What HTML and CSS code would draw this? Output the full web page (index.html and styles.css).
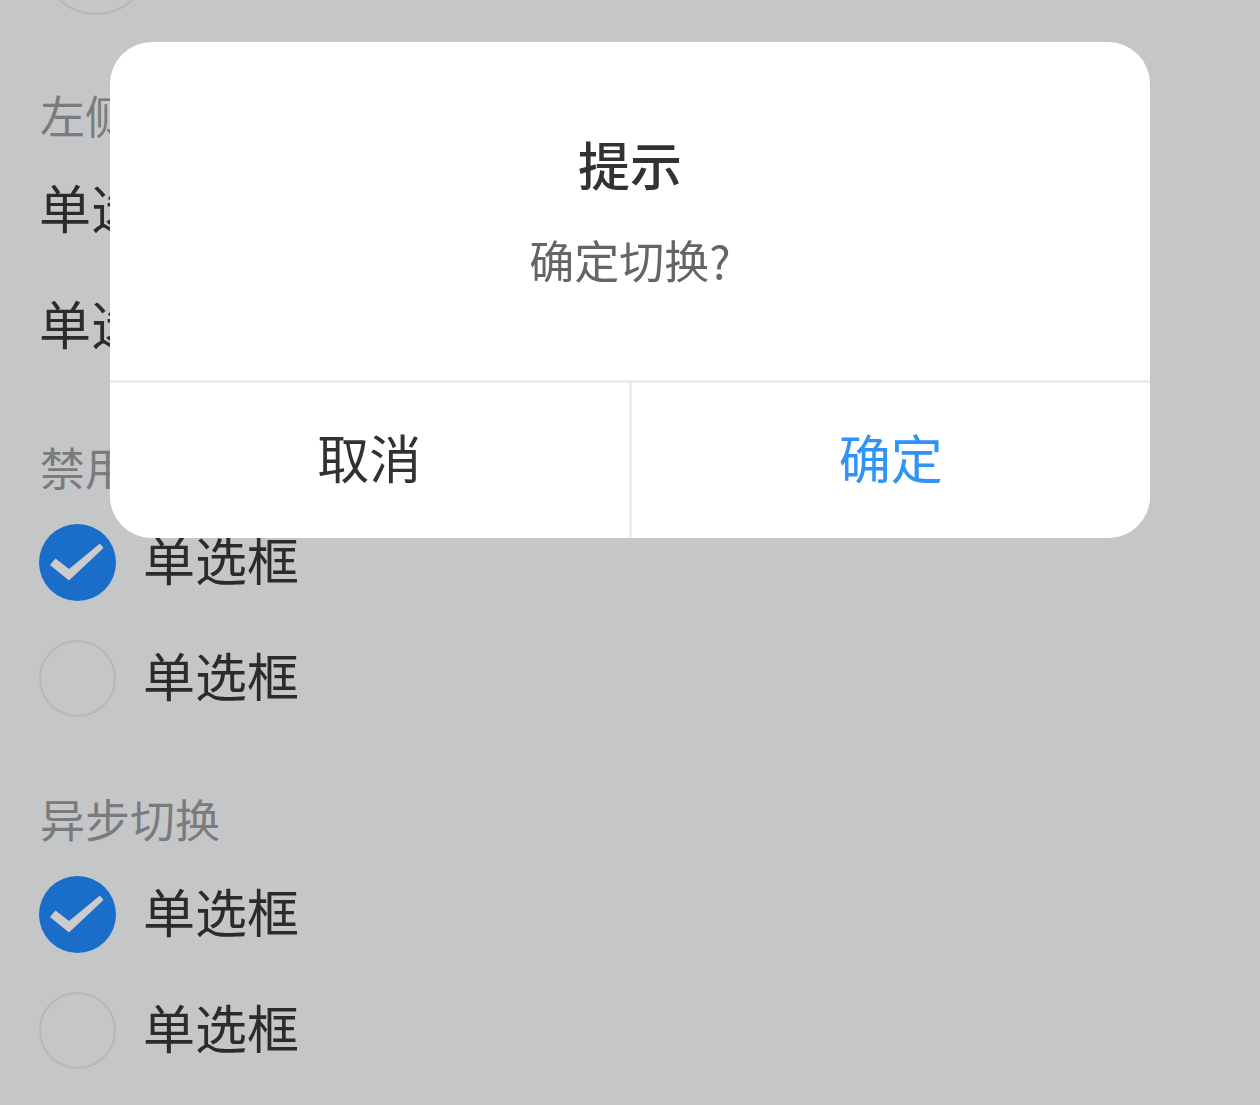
FILE: index.html
```html
<!DOCTYPE html>
<html lang="zh-CN">
<head>
<meta charset="utf-8">
<title>Radio 单选框</title>
<link rel="stylesheet" href="styles.css">
</head>
<body>
<main class="page">
  <section class="block block-first">
    <div class="row row-big"><span class="radio radio-big"></span></div>
  </section>

  <section class="block">
    <h2 class="title">左侧文本</h2>
    <div class="row"><span class="label label-left">单选框</span><span class="radio checked"><svg viewBox="0 0 77 77"><circle cx="38.5" cy="38.5" r="38.5" class="fill"/><polygon class="tick" points="16.5,34.5 11,41 30,56.5 64.5,24 61,19.5 30,45"/></svg></span></div>
    <div class="row"><span class="label label-left">单选框</span><span class="radio"></span></div>
  </section>

  <section class="block">
    <h2 class="title">禁用文本点击</h2>
    <div class="row"><span class="radio checked"><svg viewBox="0 0 77 77"><circle cx="38.5" cy="38.5" r="38.5" class="fill"/><polygon class="tick" points="16.5,34.5 11,41 30,56.5 64.5,24 61,19.5 30,45"/></svg></span><span class="label">单选框</span></div>
    <div class="row"><span class="radio"></span><span class="label">单选框</span></div>
  </section>

  <section class="block">
    <h2 class="title">异步切换</h2>
    <div class="row"><span class="radio checked"><svg viewBox="0 0 77 77"><circle cx="38.5" cy="38.5" r="38.5" class="fill"/><polygon class="tick" points="16.5,34.5 11,41 30,56.5 64.5,24 61,19.5 30,45"/></svg></span><span class="label">单选框</span></div>
    <div class="row"><span class="radio"></span><span class="label">单选框</span></div>
  </section>
</main>

<div class="overlay"></div>

<div class="dialog" role="dialog">
  <div class="dialog-content">
    <div class="dialog-title">提示</div>
    <div class="dialog-message">确定切换?</div>
  </div>
  <div class="dialog-footer">
    <button class="dialog-btn cancel">取消</button>
    <button class="dialog-btn confirm">确定</button>
  </div>
</div>
</body>
</html>
```

FILE: styles.css
```css
html, body {
  margin: 0;
  padding: 0;
}

body {
  background: #f7f8fa;
  font-family: "Noto Sans CJK SC", "Noto Sans", sans-serif;
  color: #363637;
  overflow: hidden;
  height: 1105px;
}

.page {
  padding: 0 39px;
}

.block {
  padding-top: 54px;
}

.block-first {
  padding-top: 0;
  margin-top: -112px;
}

.title {
  margin: 0 0 2px;
  padding: 0 0 6px 1px;
  font-size: 45px;
  line-height: 58px;
  font-weight: 400;
  color: #999a9c;
}

.row {
  display: flex;
  align-items: center;
  height: 116px;
}

.row-big {
  height: 144px;
}

.radio {
  flex: none;
  box-sizing: border-box;
  width: 77px;
  height: 77px;
  border: 2px solid #e4e5e8;
  border-radius: 50%;
  margin-right: 27px;
}

.radio-big {
  width: 110px;
  height: 110px;
  margin-left: 2px;
}

.radio.checked {
  border: none;
}

.radio svg {
  display: block;
  width: 77px;
  height: 77px;
}

.radio .fill {
  fill: #2189fc;
}

.radio .tick {
  fill: #ffffff;
}

.label {
  font-size: 52px;
  line-height: 60px;
  margin-bottom: 6px;
  color: #363637;
}

.label-left {
  margin-right: 27px;
}

.overlay {
  position: fixed;
  inset: 0;
  background: rgba(0, 0, 0, 0.2);
}

.dialog {
  position: fixed;
  top: 42px;
  left: 110px;
  width: 1040px;
  background: #ffffff;
  border-radius: 42px;
  overflow: hidden;
}

.dialog-content {
  padding: 92px 40px 90px;
  text-align: center;
}

.dialog-title {
  font-size: 52px;
  line-height: 60px;
  font-weight: 500;
  color: #323233;
}

.dialog-message {
  margin-top: 36px;
  font-size: 45px;
  line-height: 60px;
  color: #646566;
}

.dialog-footer {
  display: flex;
  border-top: 3px solid #ebedf0;
}

.dialog-btn {
  flex: 1;
  height: 155px;
  margin: 0;
  padding: 0 0 8px;
  border: none;
  background: #ffffff;
  font-family: "Noto Sans CJK SC", "Noto Sans", sans-serif;
  font-size: 52px;
  line-height: 60px;
  color: #323233;
}

.dialog-btn.confirm {
  border-left: 3px solid #ebedf0;
  color: #2f93f8;
}
```
